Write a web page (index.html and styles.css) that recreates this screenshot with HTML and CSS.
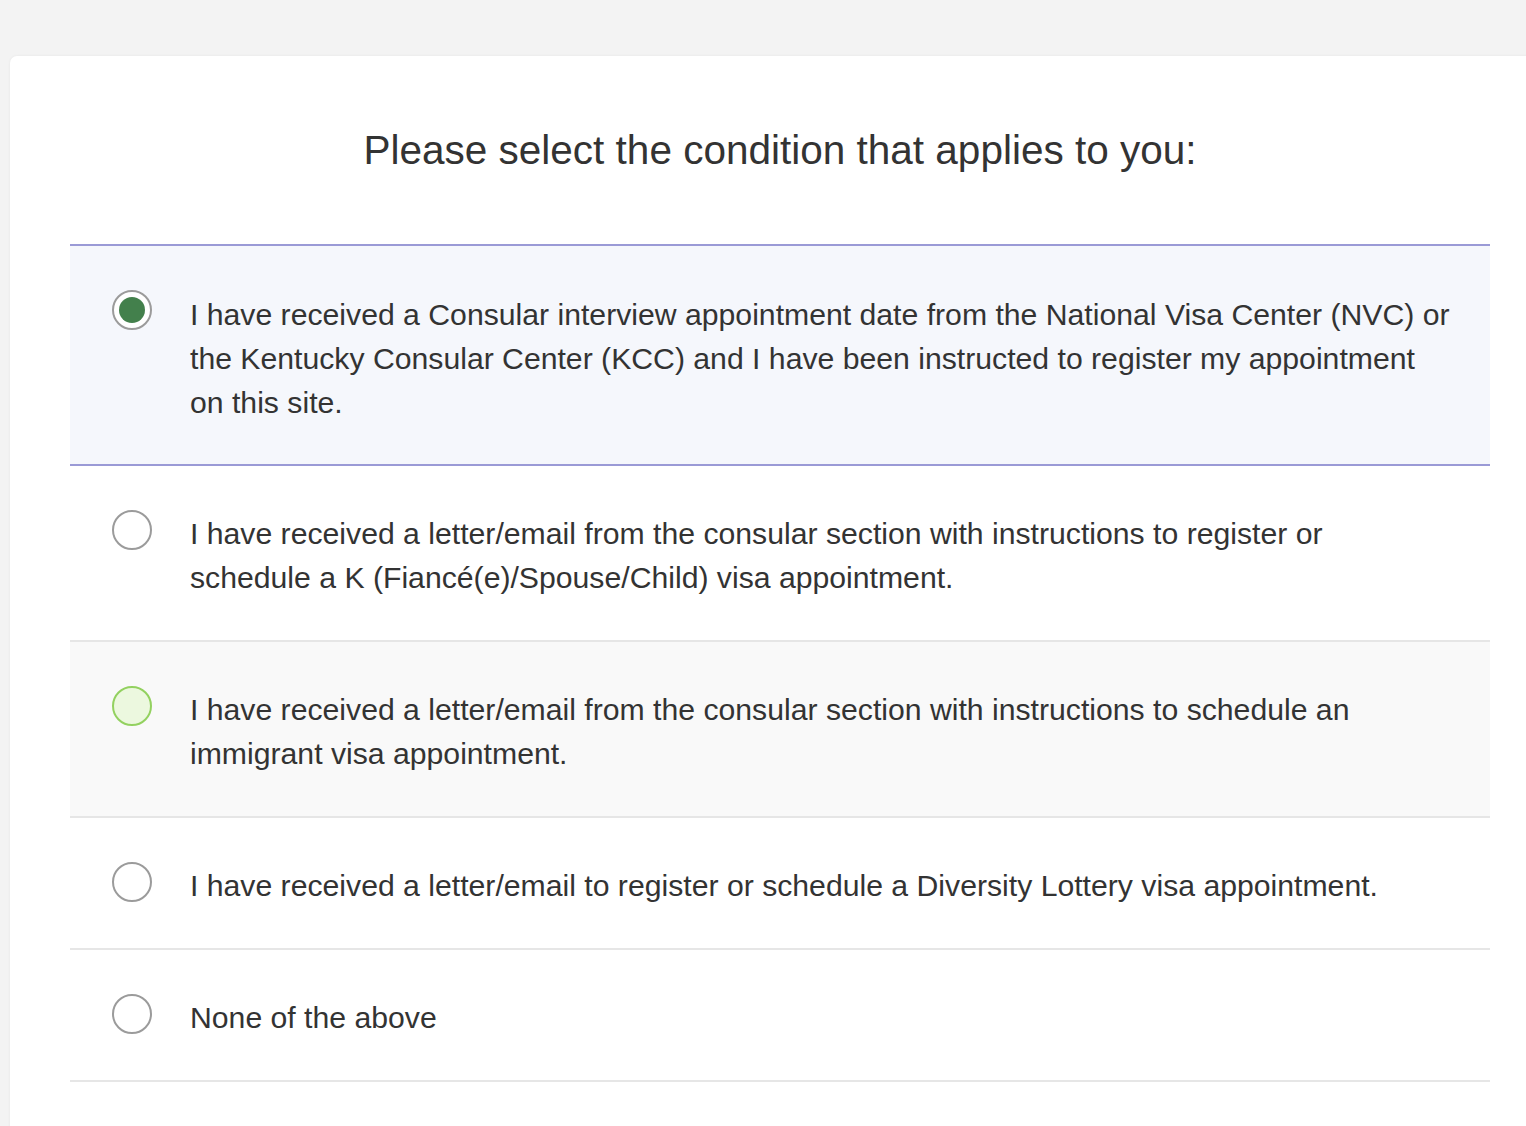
FILE: index.html
```html
<!DOCTYPE html>
<html>
<head>
<meta charset="utf-8">
<link rel="stylesheet" href="styles.css">
</head>
<body>
<div class="card">
  <h1 class="title">Please select the condition that applies to you:</h1>
  <div class="options">
    <div class="option selected">
      <span class="radio checked"></span>
      <div class="label">I have received a Consular interview appointment date from the National Visa Center (NVC) or<br>the Kentucky Consular Center (KCC) and I have been instructed to register my appointment<br>on this site.</div>
    </div>
    <div class="option">
      <span class="radio"></span>
      <div class="label">I have received a letter/email from the consular section with instructions to register or<br>schedule a K (Fiancé(e)/Spouse/Child) visa appointment.</div>
    </div>
    <div class="option hover">
      <span class="radio hovered"></span>
      <div class="label">I have received a letter/email from the consular section with instructions to schedule an<br>immigrant visa appointment.</div>
    </div>
    <div class="option">
      <span class="radio"></span>
      <div class="label">I have received a letter/email to register or schedule a Diversity Lottery visa appointment.</div>
    </div>
    <div class="option">
      <span class="radio"></span>
      <div class="label">None of the above</div>
    </div>
  </div>
</div>
</body>
</html>
```
FILE: styles.css
```css
html, body {
  margin: 0;
  padding: 0;
}
body {
  background: #f3f3f3;
  font-family: "Liberation Sans", Arial, Helvetica, sans-serif;
  color: #333;
  overflow: hidden;
  height: 1126px;
}
.card {
  margin: 56px 0 0 10px;
  width: 1540px;
  box-sizing: border-box;
  background: #fff;
  border-radius: 7px;
  box-shadow: 0 0 3px rgba(0,0,0,0.06);
  padding: 72px 60px 60px 60px;
  min-height: 1100px;
}
.title {
  margin: 0 0 72px 0;
  font-weight: normal;
  font-size: 40.5px;
  line-height: 44px;
  text-align: center;
  color: #333;
}
.options {
  display: flex;
  flex-direction: column;
}
.option {
  display: flex;
  align-items: flex-start;
  gap: 38px;
  padding: 43px 10px 43px 42px;
  border-bottom: 2px solid #e6e6e6;
  font-size: 30.2px;
  line-height: 44px;
}
.option.selected {
  background: #f5f7fc;
  border-top: 2px solid #9a9ad6;
  border-bottom: 2px solid #9a9ad6;
  padding-top: 44px;
  padding-bottom: 42px;
}
.option.hover {
  background: #f9f9f9;
}
.radio {
  flex: none;
  width: 40px;
  height: 40px;
  box-sizing: border-box;
  border: 2px solid #9b9b9b;
  border-radius: 50%;
  background: #fff;
  position: relative;
  margin-top: 1px;
}
.option.selected .radio {
  margin-top: 0;
}
.radio.checked::after {
  content: "";
  position: absolute;
  left: 5px;
  top: 5px;
  width: 26px;
  height: 26px;
  border-radius: 50%;
  background: #43804c;
}
.radio.hovered {
  border-color: #93d160;
  background: #ecf8df;
}
.label {
  flex: 1;
  padding-top: 3px;
  margin-bottom: -3px;
}
```
